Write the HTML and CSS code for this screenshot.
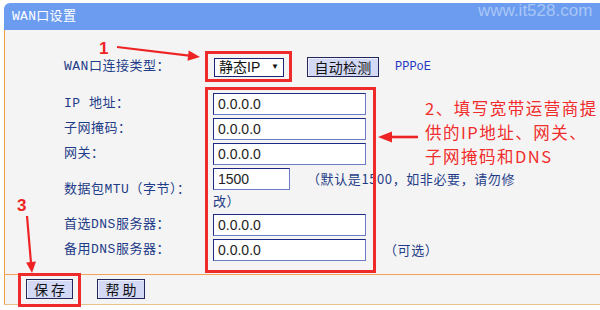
FILE: index.html
```html
<!DOCTYPE html>
<html lang="zh-CN">
<head>
<meta charset="utf-8">
<title>WAN口设置</title>
<link rel="stylesheet" href="styles.css">
</head>
<body>
<div class="stage">
  <div class="panel">
    <div class="head"><span class="title">WAN口设置</span></div>
    <div class="main">
      <div class="typerow">
        <span class="lbl lbl-type">WAN口连接类型：</span>
        <div class="sel"><span>静态IP</span><span class="arr">▼</span></div>
        <button class="btn btn-detect">自动检测</button>
        <span class="pppoe">PPPoE</span>
      </div>
      <div class="grid">
        <span class="lbl">IP 地址：</span>
        <div class="fld"><input class="inp" value="0.0.0.0"></div>
        <span class="lbl">子网掩码：</span>
        <div class="fld"><input class="inp" value="0.0.0.0"></div>
        <span class="lbl">网关：</span>
        <div class="fld"><input class="inp" value="0.0.0.0"></div>
        <span class="lbl">数据包MTU（字节）：</span>
        <div class="fld fld-mtu">
          <div class="mtu-line"><input class="inp inp-mtu" value="1500"><span class="note note-mtu">（默认是1500，如非必要，请勿修</span></div>
          <div class="note note-wrap">改）</div>
        </div>
        <span class="lbl">首选DNS服务器：</span>
        <div class="fld"><input class="inp" value="0.0.0.0"></div>
        <span class="lbl">备用DNS服务器：</span>
        <div class="fld"><input class="inp" value="0.0.0.0"><span class="note note-opt">（可选）</span></div>
      </div>
    </div>
    <div class="foot">
      <button class="btn btn-save">保 存</button>
      <button class="btn btn-help">帮 助</button>
    </div>
  </div>

  <span class="wm">www.it528.com</span>
  <div class="rbox rbox1"></div>
  <div class="rbox rbox2"></div>
  <div class="rbox rbox3"></div>
  <span class="num num1">1</span>
  <span class="num num3">3</span>
  <div class="anno">
    <div class="anno-line">2、填写宽带运营商提</div>
    <div class="anno-line">供的IP地址、网关、</div>
    <div class="anno-line">子网掩码和DNS</div>
  </div>
  <svg class="arrows" width="600" height="310" viewBox="0 0 600 310">
    <line x1="117" y1="47" x2="189" y2="55.7" stroke="#ee2424" stroke-width="2.2"/>
    <polygon points="200,57 187.5,60.8 188.7,50.6" fill="#ee2424"/>
    <line x1="418" y1="137" x2="390" y2="137" stroke="#ee2424" stroke-width="2.6"/>
    <polygon points="378,137 392,131.5 392,142.5" fill="#ee2424"/>
    <line x1="27" y1="216" x2="31" y2="263" stroke="#ee2424" stroke-width="2.2"/>
    <polygon points="32,273 36,261.6 26.1,262.5" fill="#ee2424"/>
  </svg>
</div>
</body>
</html>
```
FILE: styles.css
```css
html, body {
  margin: 0;
  padding: 0;
  background: #ffffff;
}
.stage {
  position: relative;
  width: 600px;
  height: 310px;
  overflow: hidden;
}
.panel {
  margin: 3px 0 0 4px;
  width: 596px;
}
.head {
  height: 27px;
  background: #6b9cf0;
  border-top-left-radius: 6px;
  padding-left: 8px;
  display: flex;
  align-items: center;
}
.title {
  color: #ffffff;
  font: 13px/27px "Liberation Mono", "Noto Sans CJK SC", monospace;
  letter-spacing: 0.3px;
}
.main {
  height: 245px;
  box-sizing: border-box;
  background: #f4f4f4;
  border-left: 1px solid #f0a040;
  border-bottom: 1px solid #f4a458;
  padding: 27px 0 0 59px;
}
.lbl {
  color: #1f3c88;
  font: 13px/16px "Liberation Mono", "Noto Sans CJK SC", monospace;
  letter-spacing: 0.5px;
  white-space: nowrap;
}
.typerow {
  display: flex;
  align-items: center;
  height: 20px;
}
.lbl-type {
  width: 150px;
}
.sel {
  width: 70px;
  height: 19px;
  box-sizing: border-box;
  border: 1px solid #1a2478;
  background: #ffffff;
  display: flex;
  align-items: center;
  justify-content: space-between;
  padding: 0 4px 0 4px;
  font: 14px/17px "Liberation Sans", "Noto Sans CJK SC", sans-serif;
  color: #111;
}
.arr {
  font-size: 8px;
  line-height: 10px;
  color: #111;
}
.btn {
  margin: 0;
  padding: 0;
  height: 20px;
  box-sizing: border-box;
  background: #d3d8f4;
  border: 1px solid #22265a;
  box-shadow: inset 1px 1px 0 #eef0ff;
  font: 14px/18px "Noto Sans CJK SC", sans-serif;
  color: #111;
  text-align: center;
}
.btn-detect {
  width: 72px;
  margin-left: 23px;
  letter-spacing: 0.3px;
}
.pppoe {
  margin-left: 16px;
  color: #2536c0;
  font: 12px/16px "Liberation Mono", monospace;
}
.grid {
  display: grid;
  grid-template-columns: 149px auto;
  row-gap: 3px;
  align-items: center;
  margin-top: 16px;
}
.fld {
  display: flex;
  align-items: center;
}
.fld-mtu {
  flex-direction: column;
  align-items: flex-start;
}
.mtu-line {
  display: flex;
  align-items: center;
}
.inp {
  width: 153px;
  height: 22px;
  box-sizing: border-box;
  margin: 0;
  padding: 0 0 0 4px;
  border: 1px solid;
  border-color: #1c2a82 #6c7cc8 #6c7cc8 #1c2a82;
  background: #ffffff;
  font: 14px "Liberation Sans", sans-serif;
  color: #222;
  outline: none;
}
.inp-mtu {
  width: 77px;
}
.note {
  color: #1f3c88;
  font: 13px/16px "Noto Sans CJK SC", sans-serif;
  letter-spacing: 0.6px;
  white-space: nowrap;
}
.note-mtu {
  margin-left: 17px;
}
.note-wrap {
  line-height: 21px;
}
.note-opt {
  margin-left: 18px;
}
.foot {
  height: 30px;
  box-sizing: border-box;
  background: #f4f4f4;
  border-left: 1px solid #f0a040;
  border-bottom: 1px solid #e8c48a;
  padding: 4px 0 0 21px;
  display: flex;
  align-items: flex-start;
  gap: 24px;
}
.btn-save {
  width: 47px;
}
.btn-help {
  width: 48px;
}
.wm {
  position: absolute;
  left: 478px;
  top: 1px;
  font: 17px/20px "Liberation Sans", sans-serif;
  color: #a9c6f6;
}
.rbox {
  position: absolute;
  border: 3px solid #ee2a2a;
  box-sizing: border-box;
}
.rbox1 { left: 205px; top: 51px; width: 87px; height: 31px; }
.rbox2 { left: 205px; top: 87px; width: 171px; height: 186px; }
.rbox3 { left: 18px; top: 273px; width: 63px; height: 34px; }
.num {
  position: absolute;
  color: #ee2424;
  font: bold 17px/18px "Liberation Sans", sans-serif;
}
.num1 { left: 99px; top: 40px; }
.num3 { left: 17px; top: 197px; }
.anno {
  position: absolute;
  left: 425px;
  top: 96px;
  display: flex;
  flex-direction: column;
  gap: 0;
}
.anno-line {
  color: #f02c2c;
  font: 16.5px/24px "Noto Sans CJK SC", sans-serif;
  letter-spacing: 1.5px;
  white-space: nowrap;
  height: 24px;
}
.arrows {
  position: absolute;
  left: 0;
  top: 0;
}
```
